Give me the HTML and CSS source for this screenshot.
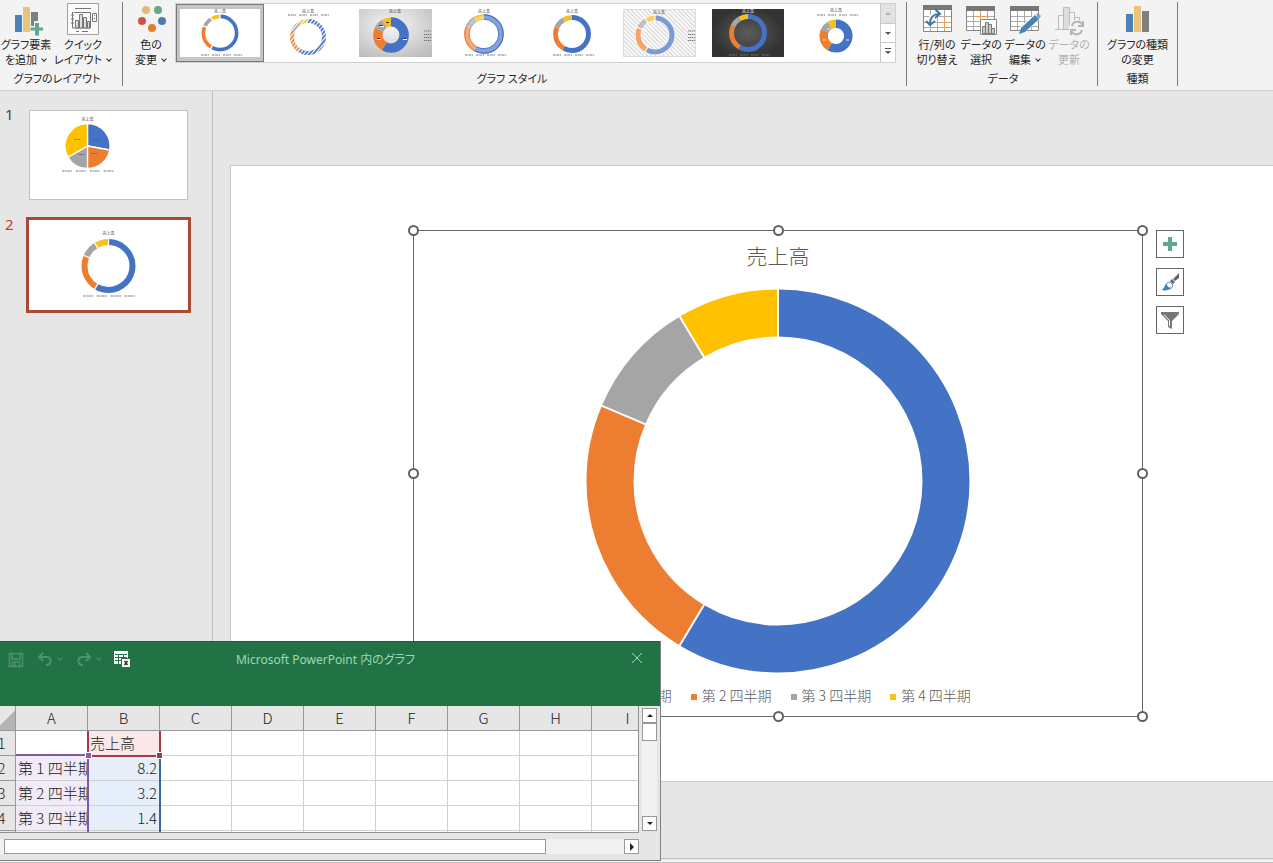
FILE: index.html
```html
<!DOCTYPE html>
<html lang="ja">
<head>
<meta charset="utf-8">
<title>グラフのデザイン</title>
<link rel="stylesheet" href="styles.css">
</head>
<body>
<svg class="defs" aria-hidden="true">
  <defs>
    <g id="ring" fill="none">
      <circle r="16" pathLength="140" transform="rotate(-90)" stroke="#4472c4" stroke-dasharray="82 58"/>
      <circle r="16" pathLength="140" transform="rotate(-90)" stroke="#ed7d31" stroke-dasharray="32 108" stroke-dashoffset="-82"/>
      <circle r="16" pathLength="140" transform="rotate(-90)" stroke="#a5a5a5" stroke-dasharray="14 126" stroke-dashoffset="-114"/>
      <circle r="16" pathLength="140" transform="rotate(-90)" stroke="#f5c022" stroke-dasharray="12 128" stroke-dashoffset="-128"/>
    </g>
    <g id="cuts" stroke="#fff">
      <path d="M0-12V-24"/>
      <path d="M0-12V-24" transform="rotate(210.86)"/>
      <path d="M0-12V-24" transform="rotate(293.14)"/>
      <path d="M0-12V-24" transform="rotate(329.14)"/>
    </g>
    <pattern id="stripe" width="3" height="3" patternUnits="userSpaceOnUse" patternTransform="rotate(40)">
      <rect width="1.8" height="3" fill="#fff"/>
    </pattern>
    <mask id="striped" maskUnits="userSpaceOnUse" x="0" y="0" width="88" height="58"><rect width="88" height="58" fill="url(#stripe)"/></mask>
    <pattern id="hatch" width="3" height="3" patternUnits="userSpaceOnUse" patternTransform="rotate(-45)">
      <rect width="3" height="3" fill="#fff"/><rect width="1.2" height="3" fill="#d4d4d4"/>
    </pattern>
    <radialGradient id="silver" cx=".45" cy=".35" r=".75"><stop offset="0" stop-color="#f6f6f6"/><stop offset="1" stop-color="#bdbdbd"/></radialGradient>
    <radialGradient id="coal"><stop offset="0" stop-color="#5c5c5c"/><stop offset="1" stop-color="#333"/></radialGradient>
    <path id="keys" d="M0 0h8m3 0h8m3 0h8m3 0h8" fill="none" stroke="#777" stroke-dasharray="2 .6 1.2 .4"/>
    <path id="sidekeys" d="M0 0h7M0 3.5h7M0 6.5h7M0 9.5h7" fill="none" stroke="#777" stroke-dasharray="1.4 .5"/>
  </defs>
</svg>

<header class="ribbon">
  <section class="group">
    <div class="tools">
      <button class="tool w52">
        <svg width="34" height="34" viewBox="0 0 34 34"><path fill="#4a82b8" d="M6 12h7v17H6z"/><path fill="#eac37b" d="M14 4h7v25h-7z"/><path fill="#7f7f7f" d="M22 9h7v20h-7z"/><path fill="#f3f3f3" d="M25 18h7v5h4v7h-4v4h-7v-4h-4v-7h4z"/><path fill="#62a78c" d="M26 20h4v4.500h4v3h-4v5h-4v-5h-4.500v-3H26z"/></svg>
        <span>グラフ要素<br>を追加<i class="chev"></i></span>
      </button>
      <button class="tool w62">
        <svg width="34" height="34" viewBox="0 0 34 34"><path fill="#fafafa" stroke="#a0a0a0" d="M1.500.500h31v31h-31z"/><g fill="none" stroke="#777"><path d="M9 5.500h16M6.500 9v16h18M5 12h3M5 16h3M5 20h3" /><path fill="#ddd" d="M9.500 17.500h3V25h-3zM13.500 11.500h3V25h-3zM17.500 14.500h3V25h-3zM21.500 18.500h2V25h-2z"/><path d="M7.500 9.500h17V25M26.500 10.500h4v8h-4zM10 28.500h3M16 28.500h6M28.500 12v1m0 2v1"/></g></svg>
        <span>クイック<br>レイアウト<i class="chev"></i></span>
      </button>
    </div>
    <h2>グラフのレイアウト</h2>
  </section>

  <section class="group styles">
    <div class="tools">
      <button class="tool w46">
        <svg width="34" height="34" viewBox="0 0 34 34"><circle cx="12" cy="7" r="4" fill="#e8b878"/><circle cx="24" cy="7" r="4" fill="#67a68b"/><circle cx="8" cy="18" r="4" fill="#cb5540"/><circle cx="28" cy="18" r="4" fill="#4d7cae"/><circle cx="18" cy="25" r="4" fill="#e07b30"/></svg>
        <span>色の<br>変更<i class="chev"></i></span>
      </button>
      <div class="gallery">
        <button class="style chosen" aria-label="スタイル 1"><svg viewBox="0 0 88 58"><rect x="4" y="5" width="80" height="48" fill="#fff"/><text x="44" y="9">売上高</text><use href="#ring" stroke-width="3.500" transform="translate(44 29) scale(1.04)"/><use href="#cuts" stroke-width="1.300" transform="translate(44 29)"/><use href="#keys" x="25" y="51"/></svg></button>
        <button class="style" aria-label="スタイル 2"><svg viewBox="0 0 88 58"><text x="44" y="9">売上高</text><use href="#keys" x="24" y="11"/><g mask="url(#striped)"><use href="#ring" stroke-width="4" transform="translate(44 33)"/></g></svg></button>
        <button class="style" aria-label="スタイル 3"><svg viewBox="0 0 88 58"><rect x="7" y="5" width="73" height="48" fill="url(#silver)"/><text x="43" y="9">売上高</text><use href="#ring" stroke-width="11.500" transform="translate(39 31) scale(.82)"/><use href="#sidekeys" x="72" y="27"/><path fill="#333" d="M25 34h3v1h-3zM51 34h3v1h-3zM27 21h4v1h-4zM34 18h3v1h-3z"/><path fill="#fff" d="M25 35h4v1h-4zM51 35h4v1h-4zM28 22h4v1h-4z"/></svg></button>
        <button class="style" aria-label="スタイル 4"><svg viewBox="0 0 88 58"><text x="44" y="9">売上高</text><g opacity=".65"><use href="#ring" stroke-width="4.800" transform="translate(44 30) scale(1.07)"/></g><use href="#ring" stroke-width="1" transform="translate(44 30) scale(1.200)"/><use href="#ring" stroke-width="1" transform="translate(44 30) scale(.92)"/><use href="#keys" x="25" y="51"/></svg></button>
        <button class="style" aria-label="スタイル 5"><svg viewBox="0 0 88 58"><text x="44" y="9">売上高</text><use href="#ring" stroke-width="4.800" transform="translate(44 30) scale(1.030)"/><use href="#keys" x="25" y="51"/></svg></button>
        <button class="style" aria-label="スタイル 6"><svg viewBox="0 0 88 58"><rect x="7.500" y="5.500" width="72" height="47" fill="url(#hatch)" stroke="#ddd"/><text x="43" y="10">売上高</text><circle cx="39" cy="31" r="17" fill="none" stroke="#fff" stroke-width="6"/><g opacity=".7"><use href="#ring" stroke-width="4.800" transform="translate(39 31) scale(1.060)"/></g><use href="#cuts" stroke-width="1.300" transform="translate(39 31) scale(.85)"/><use href="#sidekeys" x="72" y="27"/></svg></button>
        <button class="style" aria-label="スタイル 7"><svg viewBox="0 0 88 58"><rect x="8" y="5" width="72" height="48" fill="url(#coal)"/><text x="44" y="9" class="light">売上高</text><use href="#ring" stroke-width="4.800" transform="translate(44 29) scale(1.030)"/><use href="#keys" x="25" y="51"/></svg></button>
        <button class="style" aria-label="スタイル 8"><svg viewBox="0 0 88 58"><text x="44" y="8">売上高</text><use href="#keys" x="25" y="11"/><use href="#ring" stroke-width="11" transform="translate(44 32) scale(.77)"/><path stroke="#eee" d="M31 36h3M54 36h3M35 25h3"/></svg></button>
        <div class="pager">
          <button disabled aria-label="前の行"><i class="tri up"></i></button>
          <button aria-label="次の行"><i class="tri down"></i></button>
          <button aria-label="その他"><i class="tri down more"></i></button>
        </div>
      </div>
    </div>
    <h2>グラフ スタイル</h2>
  </section>

  <section class="group data">
    <div class="tools">
      <button class="tool w44">
        <svg width="34" height="34" viewBox="0 0 34 34"><path fill="#fff" stroke="#888" d="M3.500 3.500h28v25h-28z"/><path fill="#777" d="M3 2h29v5H3z"/><path stroke="#aaa" fill="none" d="M4 13.500h27M4 19.500h27M4 24.500h27M10.500 7v21M17.500 7v21M24.500 7v21"/><path stroke="#e2a05a" fill="none" d="M17.500 14v14M24.500 14v14M17 19.500h14M17 24.500h14"/><path fill="none" stroke="#fff" stroke-width="5" d="M10 20c0-6 4-9 9-9"/><path fill="none" stroke="#3f78ad" stroke-width="2" d="M10 21c0-7 4-10 9-10M15 6l5 5-5 4M6 18l4 4 5-4"/></svg>
        <span>行/列の<br>切り替え</span>
      </button>
      <button class="tool w44">
        <svg width="34" height="34" viewBox="0 0 34 34"><path fill="#fff" stroke="#888" d="M2.500 3.500h28v24h-28z"/><path fill="#777" d="M2 3h29v5H2z"/><path stroke="#aaa" fill="none" d="M3 13.500h27M3 18.500h27M3 23.500h27M9.500 8v19M16.500 8v19M23.500 8v19"/><path stroke="#e2a05a" fill="none" d="M9 13.500h15M9.500 13v10M16.500 8v12M9 18.500h8"/><path fill="#fff" stroke="#888" d="M16.500 16.500h16v15h-16z"/><path fill="#ccc" stroke="#777" d="M18.500 23.500h3v7h-3zM21.500 19.500h3v11h-3zM24.500 21.500h3v9h-3zM27.500 25.500h3v5h-3z"/></svg>
        <span>データの<br>選択</span>
      </button>
      <button class="tool w44">
        <svg width="34" height="34" viewBox="0 0 34 34"><path fill="#fff" stroke="#888" d="M2.500 3.500h28v24h-28z"/><path fill="#777" d="M2 3h29v5H2z"/><path stroke="#aaa" fill="none" d="M3 13.500h27M3 18.500h27M3 23.500h27M9.500 8v19M16.500 8v19M23.500 8v19"/><path stroke="#fff" stroke-width="7" d="M13 28 29 14"/><path fill="#4a82b8" d="m11 31 2-6L27 12l4 4-14 13z"/><path fill="#7aa5cd" d="m28 11 2-1 3 3-2 3z"/></svg>
        <span>データの<br>編集<i class="chev"></i></span>
      </button>
      <button class="tool w44" disabled>
        <svg width="34" height="34" viewBox="0 0 34 34"><g fill="#f3f3f3" stroke="#bbb"><path d="M6.500 12.500h5v14h-5zM17.500 9.500h5v17h-5zM22.500 14.500h5v12h-5z"/><path fill="#ddd" d="M11.500 4.500h6v22h-6z"/><path d="M3 26.500h14"/></g><circle cx="25" cy="25" r="8" fill="#f3f3f3"/><path fill="none" stroke="#b5b5b5" stroke-width="2" d="M20 23c1-5 8-6 11-1M30 27c-1 5-8 6-11 1M31 18v5h-5M19 32v-5h5"/></svg>
        <span>データの<br>更新</span>
      </button>
    </div>
    <h2>データ</h2>
  </section>

  <section class="group kind">
    <div class="tools">
      <button class="tool w78">
        <svg width="34" height="34" viewBox="0 0 34 34"><path fill="#4a82b8" d="M5 11h7v18H5z"/><path fill="#eac37b" d="M13 3h7v26h-7z"/><path fill="#7f7f7f" d="M21 8h7v21h-7z"/></svg>
        <span>グラフの種類<br>の変更</span>
      </button>
    </div>
    <h2>種類</h2>
  </section>
</header>

<main class="work">
  <nav class="slides" aria-label="スライド">
    <a href="#slide" class="entry"><b>1</b>
      <svg class="thumb" viewBox="0 0 159 90"><rect x=".5" y=".5" width="158" height="89" fill="#fff" stroke="#c0c0c0"/><text x="58.500" y="11">売上高</text>
        <g stroke="#fff" stroke-width="1.300" transform="translate(58.500 36)"><path fill="#4472c4" d="M0 0V-22.500A22.500 22.500 0 0 1 22.200 4z"/><path fill="#ed7d31" d="M0 0 22.200 4A22.500 22.500 0 0 1 0 22.500z"/><path fill="#a5a5a5" d="M0 0V22.500A22.500 22.500 0 0 1-19.500 11.200z"/><path fill="#ffc000" d="M0 0-19.500 11.200A22.500 22.500 0 0 1 0-22.500z"/></g>
        <path stroke="#555" stroke-dasharray="1.500 .7" opacity=".7" d="M45 29.500h7M63 29.500h8M49 44.500h7M62 43.500h7"/><use href="#keys" transform="translate(33 61) scale(1.260 1)"/></svg></a>
    <a href="#slide" class="entry current" aria-current="true"><b>2</b>
      <svg class="thumb" viewBox="0 0 159 90"><rect width="159" height="90" fill="#fff"/><text x="79.500" y="15">売上高</text><use href="#ring" stroke-width="4" transform="translate(79.500 46) scale(1.500)"/><use href="#cuts" stroke-width="1" transform="translate(79.500 46) scale(1.300)"/><use href="#keys" transform="translate(54 76) scale(1.260 1)"/></svg></a>
  </nav>

  <div class="stage">
    <article class="slide" id="slide">
      <figure class="chart">
        <figcaption>売上高</figcaption>
        <svg class="doughnut" viewBox="-192 -192 384 384" role="img" aria-label="売上高のドーナツ グラフ">
          <g fill="none" stroke-width="47">
            <circle r="168" pathLength="140" transform="rotate(-90)" stroke="#4472c4" stroke-dasharray="82 58"/>
            <circle r="168" pathLength="140" transform="rotate(-90)" stroke="#ed7d31" stroke-dasharray="32 108" stroke-dashoffset="-82"/>
            <circle r="168" pathLength="140" transform="rotate(-90)" stroke="#a5a5a5" stroke-dasharray="14 126" stroke-dashoffset="-114"/>
            <circle r="168" pathLength="140" transform="rotate(-90)" stroke="#ffc000" stroke-dasharray="12 128" stroke-dashoffset="-128"/>
          </g>
          <g stroke="#fff" stroke-width="2"><path d="M0-142V-192"/><path d="M0-142V-192" transform="rotate(210.860)"/><path d="M0-142V-192" transform="rotate(293.140)"/><path d="M0-142V-192" transform="rotate(329.140)"/></g>
        </svg>
        <ul class="legend"><li class="q1">第 1 四半期</li><li class="q2">第 2 四半期</li><li class="q3">第 3 四半期</li><li class="q4">第 4 四半期</li></ul>
        <i class="grip n w"></i><i class="grip n c"></i><i class="grip n e"></i>
        <i class="grip m w"></i><i class="grip m e"></i>
        <i class="grip s w"></i><i class="grip s c"></i><i class="grip s e"></i>
        <div class="side">
          <button aria-label="グラフ要素"><svg viewBox="0 0 26 26"><path fill="#62a78c" d="M11 6h4v5h5v4h-5v5h-4v-5H6v-4h5z"/></svg></button>
          <button aria-label="グラフ スタイル"><svg viewBox="0 0 26 26"><path fill="#6b6460" d="M22 4v5l-4 3-2-2zM15 10l3 3-2 2-3-3z"/><path fill="#fff" stroke="#4a82b8" d="M9 16c1-3 4-4 6-1s-1 5-4 5z"/><path fill="#4a7fb5" d="M4 21c3 0 3-5 6-6 0 3 2 4 4 3-1 3-5 4-10 3z"/></svg></button>
          <button aria-label="グラフ フィルター"><svg viewBox="0 0 26 26"><path fill="#777" d="M4 5h18v2l-7 7v8l-4-2v-6L4 7z"/><path fill="none" stroke="#fff" d="m7 7.500 5.500 6V19"/></svg></button>
        </div>
      </figure>
    </article>
  </div>
</main>
<footer class="status"></footer>

<section class="sheet" aria-label="Microsoft PowerPoint 内のグラフ">
  <div class="bar">
    <div class="quick">
      <button aria-label="保存"><svg width="16" height="16" viewBox="0 0 16 16"><path fill="none" stroke="currentColor" stroke-width="1.500" d="M1.500 1.500h13v13h-13zM4 2v5h8V2M4.500 14v-4h7v4M7 11v3"/></svg></button>
      <button class="undo" aria-label="元に戻す"><svg width="16" height="16" viewBox="0 0 16 16"><path fill="none" stroke="currentColor" stroke-width="2" d="M6 1 2 5l4 4M2 5h8c5 0 5 8-1 8"/></svg><i class="chev"></i></button>
      <button class="redo" aria-label="やり直し"><svg width="16" height="16" viewBox="0 0 16 16"><path fill="none" stroke="currentColor" stroke-width="2" d="m10 1 4 4-4 4M14 5H6c-5 0-5 8 1 8"/></svg><i class="chev"></i></button>
      <button class="on" aria-label="Microsoft Excel でデータを編集"><svg width="17" height="17" viewBox="0 0 17 17"><path fill="#fff" d="M0 0h14v13H0z"/><path stroke="#217346" d="M1 3.500h12M1 6.500h12M1 9.500h12M4.500 4v9M9.500 4v9" /><path fill="#fff" stroke="#217346" d="M7.500 7.500h9v9h-9z"/><path stroke="#333" stroke-width="1.500" d="m10.500 10 3 4m0-4-3 4"/></svg></button>
    </div>
    <h1>Microsoft PowerPoint 内のグラフ</h1>
    <button class="close" aria-label="閉じる"><svg width="12" height="12" viewBox="0 0 12 12"><path stroke="currentColor" d="m1 1 10 10M11 1 1 11"/></svg></button>
  </div>
  <div class="body">
    <div class="grid">
      <table>
        <thead><tr><th class="corner"></th><th>A</th><th>B</th><th>C</th><th>D</th><th>E</th><th>F</th><th>G</th><th>H</th><th>I</th></tr></thead>
        <tbody>
          <tr><th>1</th><td></td><td class="name">売上高</td><td></td><td></td><td></td><td></td><td></td><td></td><td></td></tr>
          <tr><th>2</th><td class="cat">第 1 四半期</td><td class="val">8.2</td><td></td><td></td><td></td><td></td><td></td><td></td><td></td></tr>
          <tr><th>3</th><td class="cat">第 2 四半期</td><td class="val">3.2</td><td></td><td></td><td></td><td></td><td></td><td></td><td></td></tr>
          <tr><th>4</th><td class="cat">第 3 四半期</td><td class="val">1.4</td><td></td><td></td><td></td><td></td><td></td><td></td><td></td></tr>
          <tr><th></th><td class="cat"></td><td class="val"></td><td></td><td></td><td></td><td></td><td></td><td></td><td></td></tr>
        </tbody>
      </table>
      <i class="range blue"></i><i class="range purple"></i><i class="range red"></i>
    </div>
    <div class="vscroll"><button aria-label="上へ"><i class="tri up"></i></button><span class="thumb-v"></span><button class="end" aria-label="下へ"><i class="tri down"></i></button></div>
  </div>
  <div class="hscroll"><span class="thumb-h"></span><button class="end" aria-label="右へ"><i class="tri right"></i></button></div>
</section>
</body>
</html>
```

FILE: styles.css
```css
* { box-sizing: border-box; }

body {
  position: relative;
  display: flex;
  flex-direction: column;
  height: 100vh;
  margin: 0;
  overflow: hidden;
  background: #e6e6e6;
  color: #262626;
  font: 14px "Noto Sans", "Noto Sans CJK JP", sans-serif;
}

button {
  margin: 0;
  padding: 0;
  border: 0;
  background: none;
  color: inherit;
  font: inherit;
}

h1, h2 { margin: 0; font-weight: 400; }
svg { display: block; }
svg text { font: 4px "Noto Sans CJK JP", sans-serif; text-anchor: middle; fill: #333; }
svg text.light { fill: #fff; }
.defs { position: absolute; width: 0; height: 0; }

/* Ribbon */
.ribbon {
  display: flex;
  flex: none;
  padding: 2px 0 4px;
  border-bottom: 1px solid #cfcfcf;
  background: #f3f3f3;
  font-family: "Noto Sans CJK JP", sans-serif;
  font-size: 11px;
  font-feature-settings: "palt";
}
.group {
  display: flex;
  flex-direction: column;
  height: 84px;
  padding-right: 8px;
  border-right: 1px solid #7a7a7a;
}
.group.styles { padding: 0 10px 0 5px; }
.group.data { padding: 0 6px 0 8px; }
.group.kind { padding: 0; }
.group h2 { font-size: 11px; line-height: 16px; text-align: center; }
.tools { display: flex; height: 71px; }
.tool {
  display: flex;
  flex-direction: column;
  align-items: center;
  padding-top: 1px;
  line-height: 15px;
  white-space: nowrap;
}
.tool:disabled { color: #b0b0b0; }
.w44 { width: 44px; }
.w46 { width: 46px; }
.w52 { width: 52px; }
.w62 { width: 62px; }
.w78 { width: 79px; }
.chev {
  display: inline-block;
  width: 4px;
  height: 4px;
  margin: 0 1px 3px 5px;
  border: solid currentColor;
  border-width: 0 1px 1px 0;
  transform: rotate(45deg);
}

.gallery {
  display: flex;
  height: 60px;
  margin-top: 1px;
  margin-left: 1px;
  border: 1px solid #d0d0d0;
  background: #fff;
}
.style { width: 88px; height: 58px; }
.chosen { background: #c6c6c6; box-shadow: inset 0 0 0 1px #777; }
.style svg { width: 88px; height: 58px; }
.pager { display: flex; flex-direction: column; width: 15px; border-left: 1px solid #c6c6c6; }
.pager button { display: grid; flex: 1; place-items: center; border-bottom: 1px solid #c6c6c6; color: #555; }
.pager button:last-child { border: 0; }
.pager button:disabled { background: #e2e2e2; color: #b0b0b0; }

.tri { width: 0; height: 0; border: 3px solid transparent; }
.tri.up { border-top: 0; border-bottom: 3px solid currentColor; }
.tri.down { border-bottom: 0; border-top: 3px solid currentColor; }
.tri.right { border-width: 4px 0 4px 4px; border-left-color: currentColor; }
.tri.more { position: relative; }
.tri.more::before { content: ""; position: absolute; top: -6px; left: -3px; width: 6px; height: 1px; background: currentColor; }

/* Slide list */
.work { display: flex; flex: 1; min-height: 0; }
.slides {
  display: flex;
  flex: none;
  flex-direction: column;
  gap: 14px;
  width: 213px;
  padding-top: 16px;
  border-right: 1px solid #c0c0c0;
}
.entry { display: flex; color: #444; text-decoration: none; }
.entry b { width: 26px; padding-left: 5px; font-size: 15px; font-weight: 400; line-height: 14px; }
.thumb { width: 165px; height: 96px; border: 3px solid transparent; }
.current b { color: #c43e2c; }
.current .thumb { border-color: #a84a34; }

/* Slide */
.stage { flex: 1; min-width: 0; padding: 74px 0 0 17px; overflow: hidden; }
.slide {
  position: relative;
  width: 1096px;
  aspect-ratio: 16 / 9;
  border: 1px solid #c6c6c6;
  background: #fff;
}
.chart {
  position: absolute;
  top: 64px;
  left: 182px;
  display: flex;
  flex-direction: column;
  align-items: center;
  width: 730px;
  height: 487px;
  margin: 0;
  padding-top: 8px;
  border: 1px solid #666;
  color: #595959;
  font-family: "Noto Sans CJK JP", sans-serif;
  font-weight: 300;
}
.chart figcaption { font-size: 21px; line-height: 32px; }
.doughnut { width: 384px; height: 384px; margin-top: 18px; }
.legend {
  display: flex;
  gap: 19px;
  margin: 10px 0 0;
  padding: 0 0 0 6px;
  list-style: none;
  line-height: 24px;
  white-space: nowrap;
}
.legend li { display: flex; align-items: center; gap: 5px; }
.legend li::before { content: ""; width: 6px; height: 6px; margin-top: 3px; background: #4472c4; }
.legend .q2::before { background: #ed7d31; }
.legend .q3::before { background: #a5a5a5; }
.legend .q4::before { background: #f5c518; }
.grip {
  position: absolute;
  width: 11px;
  height: 11px;
  border: 2px solid #606060;
  border-radius: 50%;
  background: #fff;
}
.grip.n { top: -6px; }
.grip.m { top: 237px; }
.grip.s { bottom: -6px; }
.grip.w { left: -6px; }
.grip.c { left: 359px; }
.grip.e { right: -6px; }
.side { position: absolute; top: -1px; left: 742px; display: grid; gap: 10px; }
.side button { width: 28px; height: 28px; border: 1px solid #666; background: #fff; }

.status { flex: none; height: 5px; border: solid #c0c0c0; border-width: 1px 0; background: #e6e6e6; box-shadow: inset 0 -2px #f3f3f3; }

/* Data window */
.sheet {
  position: absolute;
  bottom: 2px;
  left: -12px;
  width: 673px;
  border: solid #808080;
  border-width: 0 1px 1px 0;
  background: #e6e6e6;
  color: #222;
}
.bar {
  display: grid;
  grid-template-columns: 1fr auto 1fr;
  align-items: center;
  height: 65px;
  padding: 0 17px 29px 20px;
  border-top: 1px solid #1b6339;
  background: #217346;
}
.quick { display: flex; color: #4f926e; }
.quick button { display: flex; align-items: center; }
.quick .undo { margin-left: 13px; }
.quick .redo { margin-left: 13px; }
.quick .on { margin-left: 12px; }
.bar h1 { color: #9fd8b7; font-size: 12px; line-height: 16px; font-feature-settings: "palt"; }
.close { justify-self: end; color: #a6d5b9; }
.close svg { margin-bottom: 3px; }

.body { display: flex; gap: 3px; }
.grid {
  position: relative;
  width: 651px;
  height: 127px;
  overflow: hidden;
  border: solid #909090;
  border-width: 0 1px 1px 0;
}
.grid table {
  width: 676px;
  border-collapse: separate;
  border-spacing: 0;
  table-layout: fixed;
  background: #fff;
}
.grid th, .grid td {
  width: 72px;
  height: 25px;
  padding: 0;
  overflow: hidden;
  border: solid #d0d0d0;
  border-width: 0 1px 1px 0;
  font-family: "Noto Sans CJK JP", sans-serif;
  font-size: 15px;
  font-weight: 300;
  line-height: 20px;
  white-space: nowrap;
}
.grid th { border-color: #999; background: #e6e6e6; text-align: center; }
.grid th:first-child { width: 28px; }
.grid .corner { background: linear-gradient(135deg, #e6e6e6 62%, #b4b4b4 62%); }
.grid .name { padding-left: 2px; background: #fae8e8; }
.grid .cat { padding-left: 2px; background: #f1ebf8; }
.grid .val { padding-right: 2px; background: #e6eef9; text-align: right; }
.range { position: absolute; border: 0 solid; }
.range.red { top: 25px; left: 99px; width: 74px; height: 26px; border-width: 0 2px 2px; border-color: #a23a4c; }
.range.red::before, .range.red::after { content: ""; position: absolute; top: 22px; width: 5px; height: 5px; outline: 1px solid #fff; }
.range.red::before { left: -3px; background: #8460a8; }
.range.red::after { right: -3px; background: #a23a4c; }
.range.purple { top: 48px; left: 28px; width: 73px; height: 90px; border-width: 2px 2px 0 0; border-color: #7e5aa2; }
.range.blue { top: 51px; left: 101px; width: 72px; height: 90px; border-right-width: 2px; border-color: #3e6597; }

.vscroll { display: flex; flex-direction: column; width: 15px; margin: 2px 0; background: #f1f1f1; }
.vscroll button, .hscroll button { display: grid; width: 15px; height: 15px; place-items: center; border: 1px solid #999; background: #fff; }
.vscroll .end { margin-top: auto; }
.thumb-v { height: 18px; border: 1px solid #999; background: #fff; }
.hscroll { display: flex; width: 651px; margin: 6px 0; background: #f1f1f1; }
.hscroll .end { margin-left: auto; }
.thumb-h { width: 542px; margin-left: 16px; border: 1px solid #999; background: #fff; }
```
